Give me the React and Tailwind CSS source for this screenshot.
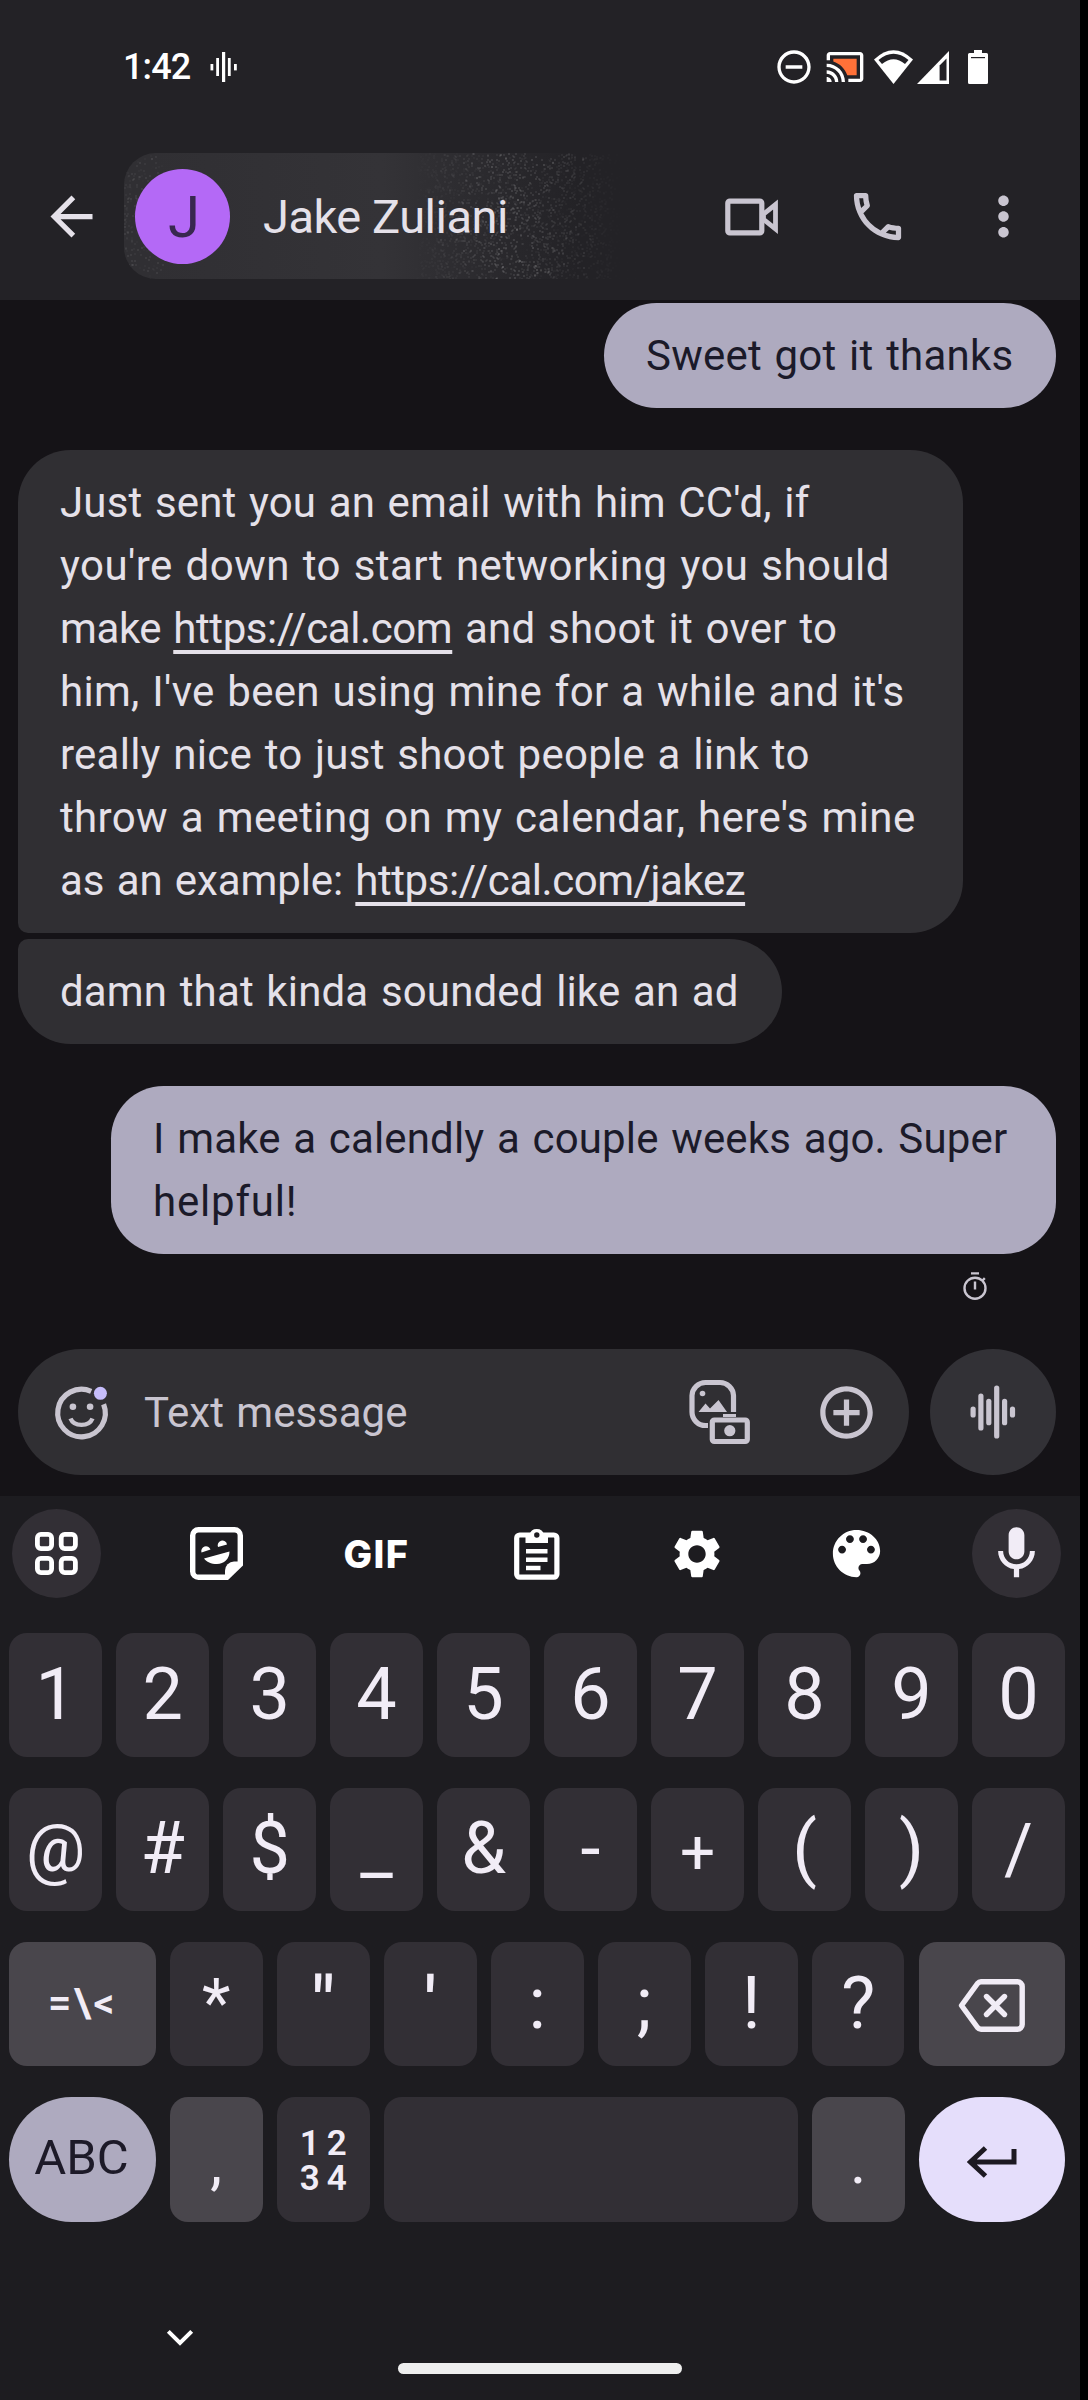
import React from "react";
import { MdArrowBack, MdMoreVert, MdOutlineCall, MdRemoveCircleOutline, MdAddCircleOutline, MdSettings } from "react-icons/md";

function speckles() {
  let seed = 42;
  const rnd = () => {
    seed = (seed * 1664525 + 1013904223) % 4294967296;
    return seed / 4294967296;
  };
  const dots = [];
  for (let i = 0; i < 3000; i++) {
    const x = 290 + rnd() * 210;
    const y = rnd() * 126;
    const fade = x < 400 ? Math.min(1, (x - 285) / 90) : Math.max(0, (500 - x) / 100);
    dots.push({ x: Math.round(x), y: Math.round(y), o: fade * rnd() * 0.11 });
  }
  for (let i = 0; i < 260; i++) {
    const x = Math.pow(rnd(), 1.6) * 40;
    dots.push({ x: Math.round(x), y: Math.round(rnd() * 126), o: rnd() * 0.07 });
  }
  return dots;
}
const DOTS = speckles();

function WaveSmall() {
  return (
    <svg className="ml-[21px]" width="27" height="30" viewBox="0 0 27 30" fill="#fff">
      <rect x="0.5" y="12" width="2.8" height="6.4" />
      <rect x="6.2" y="6" width="2.8" height="18" />
      <rect x="12" y="0" width="3.2" height="30" />
      <rect x="17.9" y="6" width="2.8" height="18" />
      <rect x="24" y="12" width="2.8" height="6.4" />
    </svg>
  );
}

function StatusBar() {
  return (
    <div className="flex h-[134px] items-center pr-[92px] pl-[123px]">
      <span className="w-[66px] text-[36px] leading-[40px] font-medium tracking-[-0.9px] whitespace-nowrap text-white">1:42</span>
      <WaveSmall />
      <MdRemoveCircleOutline className="ml-auto" size={40} color="#fff" />
      <svg className="ml-[11px]" width="40" height="40" viewBox="0 0 24 24" fill="#fff">
        <path fill="#ff7138" d="M19 7H5v1.63c3.96 1.28 7.09 4.41 8.37 8.37H19z" />
        <path d="M1 18v3h3c0-1.66-1.34-3-3-3zm0-4v2c2.76 0 5 2.24 5 5h2c0-3.87-3.13-7-7-7zm0-4v2c4.97 0 9 4.03 9 9h2c0-6.08-4.93-11-11-11zm20-7H3c-1.1 0-2 .9-2 2v3h2V5h18v14h-7v2h7c1.1 0 2-.9 2-2V5c0-1.1-.9-2-2-2z" />
      </svg>
      <svg className="ml-[9px]" width="39" height="34" viewBox="0 0 39 34">
        <path fill="#fff" d="M0 9.5Q19.5 -9 39 9.5L19.5 34z" />
        <path fill="#232226" d="M4.5 10Q19.5 -2.500 34.500 10L31 14Q19.500 4.500 8 14z" />
      </svg>
      <svg className="ml-[4px]" width="32" height="33" viewBox="0 0 32 33">
        <path fill="#fff" d="M0 33L32 0v33z" />
        <path fill="#232226" d="M22.600 14.500L29.500 7.500V29.500H22.600z" />
      </svg>
      <svg className="ml-[19px]" width="20" height="34" viewBox="0 0 20 34">
        <path fill="#fff" d="M6 0h8v3h4.500a1.500 1.500 0 0 1 1.500 1.500v28a1.500 1.500 0 0 1-1.500 1.500h-17a1.500 1.500 0 0 1-1.500-1.500v-28a1.500 1.500 0 0 1 1.500-1.500h4.500z" />
        <rect x="3" y="7" width="14" height="1.200" fill="#232226" />
      </svg>
    </div>
  );
}

function AppBar() {
  return (
    <div className="mt-[19px] flex h-[126px] items-center pr-[45px] pl-[40px] text-[#c9c5d0]">
      <MdArrowBack size={63} color="#e5e1e9" />
      <div className="relative ml-[21px] flex h-[126px] w-[516px] items-center overflow-hidden rounded-l-[32px] bg-linear-to-r from-[#302f33] from-5% via-[#343337] via-50% to-[#232226] to-88% pl-[11px]">
        <svg className="absolute inset-0" width="516" height="126" viewBox="0 0 516 126">
          {DOTS.map((d, i) => (
            <rect key={i} x={d.x} y={d.y} width="2" height="2" fill="#fff" opacity={d.o} />
          ))}
        </svg>
        <div className="relative flex size-[95px] items-center justify-center rounded-full bg-[#b469f6] pt-[2px] pl-[3px] text-[58px] leading-none text-[#38284f]">J</div>
        <span className="relative ml-[33px] text-[47px] leading-[63px] tracking-[-0.5px] whitespace-nowrap text-[#e5e1e9]">Jake Zuliani</span>
      </div>
      <div className="ml-auto flex items-center gap-[63px]">
        <svg width="63" height="63" viewBox="0 0 63 63" fill="none" stroke="currentColor" strokeWidth="5.200" strokeLinejoin="round">
          <rect x="7.800" y="16.100" width="34" height="31.800" rx="2" />
          <path d="M55.500 19.500V44L43.500 34.500V29z" strokeWidth="4.800" strokeLinejoin="miter" />
        </svg>
        <MdOutlineCall size={63} />
        <MdMoreVert size={63} />
      </div>
    </div>
  );
}

const link = "underline decoration-[3.5px] underline-offset-[7px] [text-decoration-skip-ink:none]";

function Messages() {
  return (
    <div className="flex h-[1196px] flex-col bg-[#151317] pt-[3px] pr-[24px] pl-[18px] text-[42px] leading-[63px] whitespace-nowrap text-[#e5e1e9] [word-spacing:2px]">
      <div className="w-[452px] self-end rounded-[52.5px] bg-[#aeaabf] px-[42px] py-[21px] tracking-[0.22px] text-[#1b1a29]">Sweet got it thanks</div>
      <div className="mt-[42px] w-[945px] rounded-[52.5px] rounded-bl-[10px] bg-[#302f33] px-[42px] py-[21px]">
        <div className="tracking-[0.15px]">Just sent you an email with him CC'd, if</div>
        <div className="tracking-[0.44px]">you're down to start networking you should</div>
        <div className="tracking-[0.25px]">
          <span className="tracking-[-0.4px]">make </span>
          <span className={`${link} tracking-[-0.4px]`}>https://cal.com</span> and shoot it over to
        </div>
        <div className="tracking-[0.29px]">him, I've been using mine for a while and it's</div>
        <div className="tracking-[0.24px]">really nice to just shoot people a link to</div>
        <div className="tracking-[0.36px]">throw a meeting on my calendar, here's mine</div>
        <div className="tracking-[-0.1px]">
          as an example: <span className={`${link} tracking-[-0.45px]`}>https://cal.com/jakez</span>
        </div>
      </div>
      <div className="mt-[6px] w-[764px] rounded-[52.5px] rounded-tl-[10px] bg-[#302f33] px-[42px] py-[21px] tracking-[0.15px]">damn that kinda sounded like an ad</div>
      <div className="mt-[42px] w-[945px] self-end rounded-[52.5px] bg-[#aeaabf] px-[42px] py-[21px] text-[#1b1a29]">
        <div className="tracking-[0.16px]">I make a calendly a couple weeks ago. Super</div>
        <div className="tracking-[0.8px]">helpful!</div>
      </div>
      <svg className="mt-[18px] mr-[69px] self-end" width="24" height="28" viewBox="0 0 24 28" fill="none" stroke="#c9c5d0" strokeWidth="2.400">
        <circle cx="12" cy="16.200" r="10.500" />
        <path d="M8 1.400h8M12 9.500v8M19.500 8.500l2.300-2.300" />
      </svg>
      <div className="mt-auto mb-[21px] flex h-[126px] gap-[21px]">
        <div className="flex w-[891px] items-center rounded-full bg-[#302f33] pr-[31px] pl-[32px] text-[#c9c5d0]">
          <svg width="63" height="63" viewBox="0 0 63 63" fill="none" stroke="currentColor">
            <path d="M41.200 10.300A23.800 23.800 0 1 0 53.600 23.200" strokeWidth="5.200" />
            <path d="M20.500 37.500C24 46 39 46 42.500 37.500" strokeWidth="4.400" />
            <circle cx="22.900" cy="25.700" r="3.300" fill="currentColor" stroke="none" />
            <circle cx="40.100" cy="25.700" r="3.300" fill="currentColor" stroke="none" />
            <circle cx="50.400" cy="12.300" r="6.500" fill="#c6bdfb" stroke="none" />
          </svg>
          <span className="ml-[31px]">Text message</span>
          <svg className="ml-auto" width="62" height="66" viewBox="0 0 62 66" fill="none" stroke="currentColor" strokeWidth="5.200">
            <path d="M19 46.500H16.500A13.500 13.500 0 0 1 3 33V16.500A13.500 13.500 0 0 1 16.500 3.500H31A13.500 13.500 0 0 1 44.500 16.500V33" />
            <path d="M9.500 33L16.500 24.500L21 29.500L29.500 21L38 33z" fill="currentColor" stroke="none" />
            <circle cx="13.500" cy="14.500" r="2.800" fill="currentColor" stroke="none" />
            <rect x="23.300" y="41" width="35" height="21.500" rx="2" />
            <path d="M34 36.500h13" strokeWidth="3" />
            <circle cx="40.800" cy="51.700" r="5.600" fill="currentColor" stroke="none" />
          </svg>
          <MdAddCircleOutline className="ml-[64px]" size={63} />
        </div>
        <div className="flex w-[126px] items-center justify-center rounded-full bg-[#323136]">
          <svg width="46" height="54" viewBox="0 0 46 54" fill="#c9c5d0">
            <rect x="0.500" y="21.500" width="5.200" height="11" rx="2.600" />
            <rect x="8.300" y="8.500" width="5.200" height="37" rx="2.600" />
            <rect x="16.200" y="13.700" width="5.200" height="26.600" rx="2.600" />
            <rect x="24.100" y="0.500" width="5.200" height="53" rx="2.600" />
            <rect x="32" y="13.700" width="5.200" height="26.600" rx="2.600" />
            <rect x="39.900" y="21.500" width="5.200" height="11" rx="2.600" />
          </svg>
        </div>
      </div>
    </div>
  );
}

function Toolbar() {
  const cell = "flex size-[89px] items-center justify-center rounded-full";
  return (
    <div className="flex justify-between pt-[13px] pr-[19px] pl-[12px] text-white">
      <div className={`${cell} bg-[#322f35]`}>
        <svg width="43" height="43" viewBox="0 0 43 43" fill="none" stroke="#fff" strokeWidth="4.800">
          <rect x="2.400" y="2.400" width="14.200" height="14.200" rx="3.500" />
          <rect x="26.200" y="2.400" width="14.200" height="14.200" rx="3.500" />
          <rect x="2.400" y="26.400" width="14.200" height="14.200" rx="3.500" />
          <rect x="26.200" y="26.400" width="14.200" height="14.200" rx="3.500" />
        </svg>
      </div>
      <div className={cell}>
        <svg width="53" height="53" viewBox="0 0 53 53">
          <path fill="none" stroke="#fff" strokeWidth="5.400" d="M37 50.300H8.500A5.800 5.800 0 0 1 2.700 44.500V8.500A5.800 5.800 0 0 1 8.500 2.700H44.500A5.800 5.800 0 0 1 50.300 8.500V38" />
          <path fill="#fff" d="M35 53V43.500a9 9 0 0 1 9-9h9V38.500L38 53z" />
          <path fill="#fff" d="M11.500 25.500A4.700 4.700 0 1 1 20.500 22.500z M28 20A4.700 4.700 0 1 1 37 17.500z M14 31.500L39.500 24.500C39.500 32 34 37 27 37C21 37 16.500 35 14 31.500z" />
        </svg>
      </div>
      <div className={`${cell} font-['Inter',sans-serif] text-[38px] leading-none font-extrabold tracking-[1.5px]`}>GIF</div>
      <div className={cell}>
        <svg width="46" height="53" viewBox="0 0 46 53">
          <rect x="2.700" y="8" width="40.200" height="42.200" rx="3" fill="none" stroke="#fff" strokeWidth="5.200" />
          <path fill="#fff" d="M11.500 16V8H15.500A7.400 7.400 0 0 1 30 8H34V16z" />
          <circle cx="22.800" cy="8" r="2.700" fill="#1d1c20" />
          <path stroke="#fff" strokeWidth="4.600" d="M12 24.200h21.500M12 32.800h21.500M12 41h14.500" />
        </svg>
      </div>
      <div className={cell}>
        <MdSettings size={58} />
      </div>
      <div className={cell}>
        <svg width="63" height="63" viewBox="0 0 24 24" fill="#fff">
          <path d="M12 3c-4.970 0-9 4.030-9 9s4.030 9 9 9c.83 0 1.500-.67 1.500-1.500 0-.39-.15-.74-.39-1.010-.23-.26-.38-.61-.38-.99 0-.83.67-1.500 1.500-1.500H16c2.760 0 5-2.240 5-5 0-4.420-4.030-8-9-8zm-5.500 9c-.83 0-1.500-.67-1.500-1.500S5.670 9 6.500 9 8 9.670 8 10.500 7.330 12 6.500 12zm3-4C8.670 8 8 7.330 8 6.500S8.670 5 9.500 5s1.500.67 1.500 1.500S10.330 8 9.500 8zm5 0c-.83 0-1.500-.67-1.500-1.500S13.670 5 14.500 5s1.500.67 1.500 1.500S15.330 8 14.500 8zm3 4c-.83 0-1.500-.67-1.500-1.500S16.670 9 17.500 9s1.500.67 1.500 1.500-.67 1.500-1.500 1.500z" />
        </svg>
      </div>
      <div className={`${cell} bg-[#322f35]`}>
        <svg width="63" height="63" viewBox="0 0 24 24" fill="#f1ecf6">
          <path d="M12 14.200c1.660 0 3-1.340 3-3V5c0-1.660-1.340-3-3-3S9 3.340 9 5v6.200c0 1.660 1.340 3 3 3zM17.100 11c0 2.900-2.300 5.100-5.100 5.100S6.900 13.900 6.900 11H5c0 3.530 2.610 6.430 6 6.920V21h2v-3.080c3.390-.49 6-3.390 6-6.920z" />
        </svg>
      </div>
    </div>
  );
}

function Key({ children, className = "w-[92.7px] bg-[#322f35]", text = "text-[72px]" }) {
  return (
    <div className={`flex h-[123.5px] shrink-0 items-center justify-center rounded-[18px] leading-none text-[#f1ecf6] ${className} ${text}`}>
      {children}
    </div>
  );
}

function Keyboard() {
  const row = "flex gap-[14.3px]";
  return (
    <div className="flex h-[904px] flex-col bg-[#1d1c20]">
      <Toolbar />
      <div className="mt-[35px] flex flex-col gap-[31.1px] pl-[9.300px]">
        <div className={row}>
          {["1", "2", "3", "4", "5", "6", "7", "8", "9", "0"].map((k) => (
            <Key key={k}>{k}</Key>
          ))}
        </div>
        <div className={row}>
          <Key text="text-[66px]">@</Key>
          <Key>#</Key>
          <Key>$</Key>
          <Key>_</Key>
          <Key>&amp;</Key>
          <Key>-</Key>
          <Key text="text-[62px] pt-[6px]">+</Key>
          <Key>(</Key>
          <Key>)</Key>
          <Key text="text-[70px]">/</Key>
        </div>
        <div className={row}>
          <Key className="w-[146.3px] bg-[#49464c]" text="text-[41px] font-semibold tracking-[2.500px]">{"=\\<"}</Key>
          <Key text="text-[66px]">*</Key>
          <Key text="text-[72px] font-medium">"</Key>
          <Key text="text-[72px] font-medium">'</Key>
          <Key>:</Key>
          <Key>;</Key>
          <Key>!</Key>
          <Key>?</Key>
          <Key className="w-[146.3px] bg-[#49464c]">
            <svg className="mt-[4px]" width="67" height="53" viewBox="0 0 67 53" fill="none" stroke="#f1ecf6" strokeWidth="5.400">
              <path strokeLinejoin="round" d="M3.500 26.500L19.500 4.500Q21 2.700 23 2.700H59.500A4.700 4.700 0 0 1 64.200 7.400V45.600A4.700 4.700 0 0 1 59.500 50.300H23Q21 50.300 19.500 48.500z" />
              <path strokeLinecap="round" d="M28.500 17.500L46.500 35.500M46.500 17.500L28.500 35.500" />
            </svg>
          </Key>
        </div>
        <div className={row}>
          <div className="flex h-[125px] w-[146.3px] items-center justify-center rounded-[62.5px] bg-[#aeaabf] pr-[2px] pb-[4px] text-[49px] leading-none text-[#1d1a28]">ABC</div>
          <Key className="h-[125px] w-[92.7px] bg-[#49464c]" text="text-[60px] pt-[8px]">,</Key>
          <Key className="h-[125px] w-[92.7px] bg-[#322f35]" text="text-[35px] font-semibold">
            <div className="grid grid-cols-[20px_20px] gap-x-[7px] pt-[3px] text-center leading-[35px]">
              <span>1</span>
              <span>2</span>
              <span>3</span>
              <span>4</span>
            </div>
          </Key>
          <Key className="h-[125px] w-[413.700px] bg-[#322f35]" />
          <Key className="h-[125px] w-[92.7px] bg-[#49464c]" text="text-[62px] pt-[6px]">.</Key>
          <div className="flex h-[125px] w-[146.3px] items-center justify-center rounded-[62.5px] bg-[#e5defb]">
            <svg className="mt-[6px]" width="50" height="32" viewBox="0 0 50 32" fill="none" stroke="#1d1a22" strokeWidth="5">
              <path d="M47 3V16H4M18.500 2L3.500 16L18.500 30" />
            </svg>
          </div>
        </div>
      </div>
      <svg className="mt-[107px] ml-[166px]" width="28" height="18" viewBox="0 0 28 18" fill="none" stroke="#fff" strokeWidth="4">
        <path d="M2.300 2.300L14 14L25.700 2.300" />
      </svg>
      <div className="mx-auto mt-[16px] h-[11px] w-[284px] rounded-full bg-[#eeeeee]" />
    </div>
  );
}

export default function App() {
  return (
    <div className="h-[2400px] w-[1088px] overflow-hidden bg-black pr-[8px] font-['Roboto',sans-serif]">
      <div className="flex h-[300px] flex-col bg-[#232226]">
        <StatusBar />
        <AppBar />
      </div>
      <Messages />
      <Keyboard />
    </div>
  );
}
